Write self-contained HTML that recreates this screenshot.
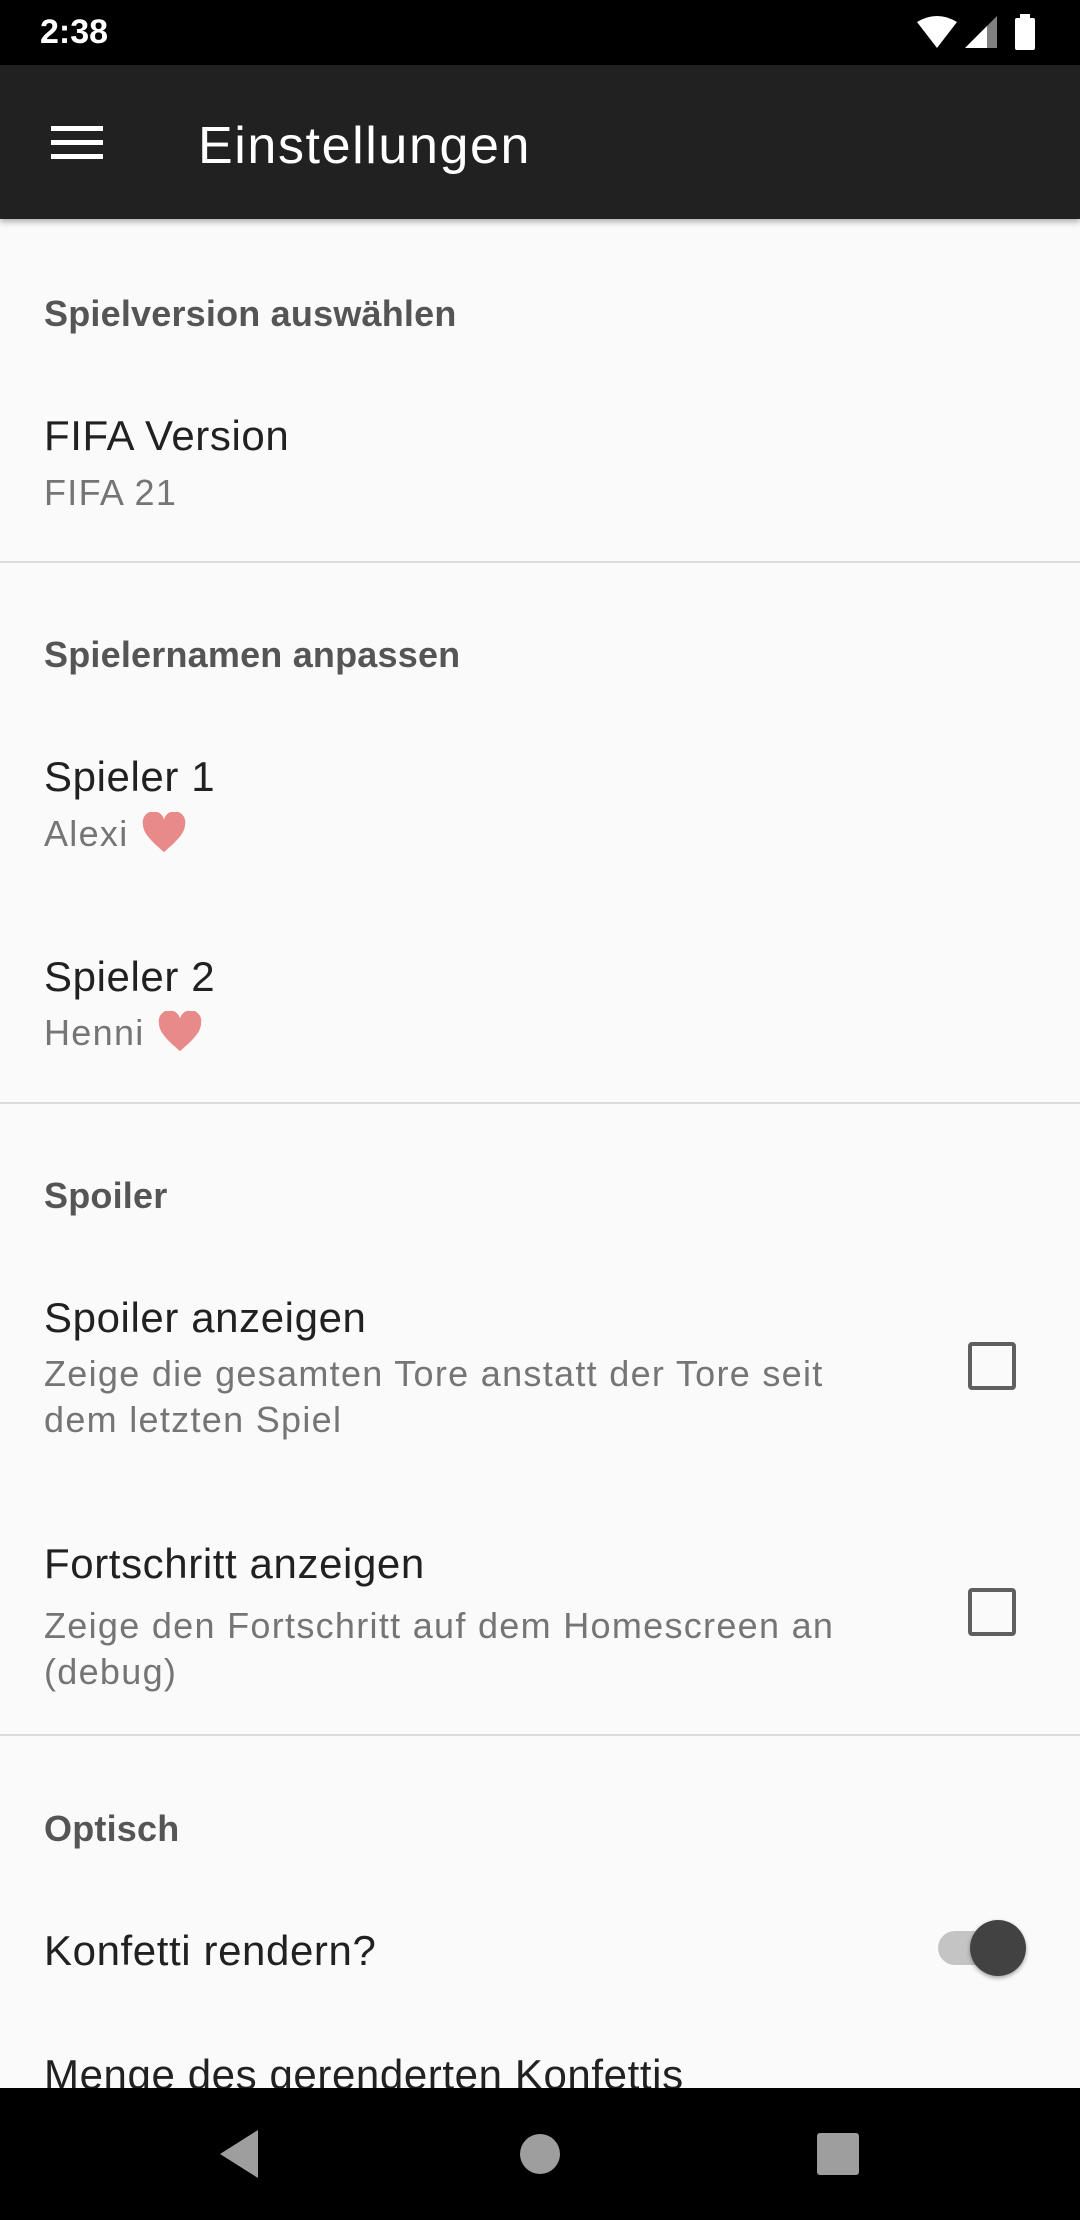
<!DOCTYPE html>
<html><head><meta charset="utf-8"><style>
*{margin:0;padding:0;box-sizing:border-box}
body{width:1080px;height:2220px;background:#fafafa;font-family:"Liberation Sans",sans-serif;position:relative;overflow:hidden}
.t{position:absolute;left:44px;white-space:nowrap;line-height:60px}
.h{font-size:36px;font-weight:bold;color:#555;letter-spacing:0.2px}
.ti{font-size:42px;color:#212121;letter-spacing:0.6px}
.s{font-size:36px;color:#757575;letter-spacing:1.3px}
.d{position:absolute;left:0;width:1080px;height:2px;background:#dcdcdc}
.cb{position:absolute;left:968px;width:48px;height:48px;border:4px solid #5f5f5f;border-radius:4px}
.heart{display:inline-block;vertical-align:-8px;margin-left:12px}
</style></head><body>
<div style="position:absolute;left:0;top:0;width:1080px;height:65px;background:#000"></div>
<div style="position:absolute;left:40px;top:12px;color:#fff;font-size:34px;font-weight:bold;line-height:40px">2:38</div>
<svg style="position:absolute;left:915px;top:14px" width="130" height="40" viewBox="0 0 130 40">
<path d="M2 8 Q22 -4 42 8 L22 34 Z" fill="#fff"/>
<path d="M50 34 L82 2 L82 34 Z" fill="#fff" opacity=".5"/>
<path d="M50 34 L72 12 L72 34 Z" fill="#fff"/>
<rect x="100" y="4" width="20" height="32" rx="2" fill="#fff"/><rect x="105" y="0" width="10" height="5" fill="#fff"/>
</svg>
<div style="position:absolute;left:0;top:65px;width:1080px;height:154px;background:#212121;box-shadow:0 3px 6px rgba(0,0,0,.3)"></div>
<div style="position:absolute;left:51px;top:126px;width:52px;height:5px;background:#fff"></div>
<div style="position:absolute;left:51px;top:140px;width:52px;height:5px;background:#fff"></div>
<div style="position:absolute;left:51px;top:154px;width:52px;height:5px;background:#fff"></div>
<div style="position:absolute;left:198px;top:114px;color:#fff;font-size:52px;line-height:64px;letter-spacing:1.6px">Einstellungen</div>

<div class="t h" style="top:284px">Spielversion auswählen</div>
<div class="t ti" style="top:406px">FIFA Version</div>
<div class="t s" style="top:463px">FIFA 21</div>
<div class="d" style="top:561px"></div>
<div class="t h" style="top:625px">Spielernamen anpassen</div>
<div class="t ti" style="top:747px">Spieler 1</div>
<div class="t s" style="top:804px">Alexi<svg class="heart" width="46" height="42" viewBox="0 0 24 22"><path d="M12 21 C5 15 1 11 1 6.5 A5.5 5.5 0 0 1 12 4 A5.5 5.5 0 0 1 23 6.5 C23 11 19 15 12 21Z" fill="#e88a8a"/></svg></div>
<div class="t ti" style="top:947px">Spieler 2</div>
<div class="t s" style="top:1003px">Henni<svg class="heart" width="46" height="42" viewBox="0 0 24 22"><path d="M12 21 C5 15 1 11 1 6.5 A5.5 5.5 0 0 1 12 4 A5.5 5.5 0 0 1 23 6.5 C23 11 19 15 12 21Z" fill="#e88a8a"/></svg></div>
<div class="d" style="top:1102px"></div>
<div class="t h" style="top:1166px">Spoiler</div>
<div class="t ti" style="top:1288px">Spoiler anzeigen</div>
<div class="t s" style="top:1351px;line-height:46px">Zeige die gesamten Tore anstatt der Tore seit<br>dem letzten Spiel</div>
<div class="cb" style="top:1342px"></div>
<div class="t ti" style="top:1534px">Fortschritt anzeigen</div>
<div class="t s" style="top:1603px;line-height:46px">Zeige den Fortschritt auf dem Homescreen an<br>(debug)</div>
<div class="cb" style="top:1588px"></div>
<div class="d" style="top:1734px"></div>
<div class="t h" style="top:1799px">Optisch</div>
<div class="t ti" style="top:1921px">Konfetti rendern?</div>
<div style="position:absolute;left:938px;top:1931px;width:84px;height:34px;border-radius:17px;background:#c4c4c4"></div>
<div style="position:absolute;left:970px;top:1920px;width:56px;height:56px;border-radius:50%;background:#424242;box-shadow:0 2px 4px rgba(0,0,0,.35)"></div>
<div class="t ti" style="top:2045px">Menge des gerenderten Konfettis</div>

<div style="position:absolute;left:0;top:2088px;width:1080px;height:132px;background:#000"></div>
<svg style="position:absolute;left:0;top:2088px" width="1080" height="132">
<path d="M258 42 L258 90 L220 66 Z" fill="#9e9e9e"/>
<circle cx="540" cy="66" r="20" fill="#9e9e9e"/>
<rect x="817" y="45" width="42" height="42" rx="3" fill="#9e9e9e"/>
</svg>
</body></html>
